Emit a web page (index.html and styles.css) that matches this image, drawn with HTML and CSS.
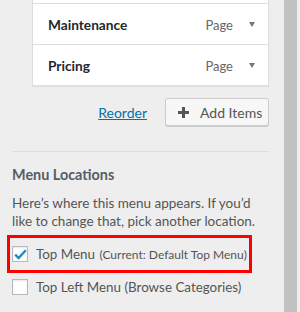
FILE: index.html
```html
<!DOCTYPE html>
<html>
<head>
<meta charset="utf-8">
<link rel="stylesheet" href="styles.css">
</head>
<body>
<div class="page">
  <div class="panel">
    <div class="card">
      <div class="row"><span class="title">Maintenance</span><span class="type">Page</span><span class="arrow"></span></div>
      <div class="row"><span class="title">Pricing</span><span class="type">Page</span><span class="arrow"></span></div>
    </div>
    <div class="actions">
      <a class="reorder" href="#">Reorder</a>
      <button class="add"><svg class="plus" width="11" height="11" viewBox="0 0 11 11"><rect x="4" y="0" width="3" height="11" fill="#555"/><rect x="0" y="4" width="11" height="3" fill="#555"/></svg><span>Add Items</span></button>
    </div>
    <div class="locations">
      <h3 class="heading">Menu Locations</h3>
      <p class="desc">Here’s where this menu appears. If you’d like to change that, pick another location.</p>
      <label class="loc highlighted"><span class="box"><svg width="13" height="11" viewBox="0 0 13 11"><path d="M1.2 5.6 L4.6 9 L11.8 1.2" fill="none" stroke="#1e8cbe" stroke-width="2.4"/></svg></span><span>Top Menu <small class="note">(Current: Default Top Menu)</small></span></label>
      <label class="loc"><span class="box"></span><span>Top Left Menu (Browse Categories)</span></label>
    </div>
  </div>
  <div class="scrollbar"></div>
</div>
</body>
</html>
```
FILE: styles.css
```css
html, body {
  margin: 0;
  padding: 0;
  background: #eee;
  font-family: Lato, "Noto Sans", sans-serif;
  color: #555;
  overflow: hidden;
}
.page {
  display: flex;
  height: 312px;
}
.panel {
  width: 257px;
  padding: 0 15px 0 12px;
}
.scrollbar {
  width: 13px;
  background: #c1c1c1;
}
.card {
  margin-left: 20px;
  padding-top: 3px;
  background: #fff;
  border: 1px solid #ddd;
  border-top: none;
  box-shadow: 0 1px 1px rgba(0,0,0,.06);
}
.row {
  display: flex;
  align-items: center;
  height: 39px;
  border-top: 1px solid #ddd;
  padding: 1px 13px 0 15px;
}
.title {
  flex: 1;
  font-size: 13.7px;
  font-weight: 700;
  color: #23282d;
}
.type {
  font-size: 13px;
  color: #666;
  margin-right: 16px;
}
.arrow {
  width: 0;
  height: 0;
  border-left: 3.5px solid transparent;
  border-right: 3.5px solid transparent;
  border-top: 5px solid #72777c;
}
.actions {
  display: flex;
  justify-content: flex-end;
  align-items: center;
  gap: 18px;
  margin-top: 12px;
}
.reorder {
  font-size: 14px;
  color: #0073aa;
  text-decoration: underline;
}
.add {
  display: flex;
  align-items: center;
  gap: 11px;
  box-sizing: border-box;
  height: 28px;
  width: 104px;
  padding: 0 0 0 12px;
  border: 1px solid #ccc;
  border-radius: 3px;
  background: #f7f7f7;
  box-shadow: 0 1px 0 #ccc;
  font-family: inherit;
  font-size: 14px;
  color: #555;
  white-space: nowrap;
}
.plus {
  flex: none;
}
.locations {
  margin-top: 25px;
  border-top: 1px solid #ddd;
}
.heading {
  margin: 14px 0 0;
  font-size: 14.4px;
  line-height: 18px;
  font-weight: 700;
  color: #555d66;
}
.desc {
  margin: 10px 0 0;
  font-size: 13.5px;
  line-height: 18px;
}
.loc {
  display: flex;
  align-items: center;
  gap: 8px;
  font-size: 13.4px;
  white-space: nowrap;
  height: 20px;
}
.highlighted {
  box-sizing: border-box;
  margin: 5px 0 0 -5px;
  padding: 0 0 0 2px;
  width: 245px;
  height: 38px;
  border: 3px solid #f00;
}
.note {
  font-size: 12px;
  margin-left: 1px;
}
.box {
  display: flex;
  align-items: center;
  justify-content: center;
  width: 14px;
  height: 14px;
  border: 1px solid #b4b9be;
  background: #fff;
  box-shadow: inset 0 1px 2px rgba(0,0,0,.1);
  flex: none;
}
.loc + .loc {
  margin-top: 4px;
}
```
